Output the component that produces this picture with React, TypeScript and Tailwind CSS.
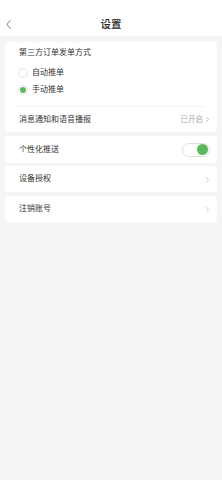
import React, { useState } from 'react';

const Chevron: React.FC<{ className?: string }> = ({ className }) => (
  <svg viewBox="0 0 6 10" className={className} fill="none" stroke="currentColor" strokeWidth="1" strokeLinecap="round" strokeLinejoin="round">
    <path d="M1.5 1.5 L4.5 5 L1.5 8.5" />
  </svg>
);

const Radio: React.FC<{ checked: boolean; label: string; onClick: () => void; className?: string }> = ({ checked, label, onClick, className }) => (
  <button type="button" onClick={onClick} className={`flex items-center pl-[13px] text-left ${className ?? ''}`}>
    <span className="flex h-[10px] w-[10px] items-center justify-center rounded-full border border-[#e3e3e3] bg-white">
      {checked && <span className="h-[6px] w-[6px] rounded-full bg-[#5cb85c]" />}
    </span>
    <span className="ml-[4px] text-[8px] text-[#333]">{label}</span>
  </button>
);

export default function App() {
  const [mode, setMode] = useState<'auto' | 'manual'>('manual');
  const [push, setPush] = useState(true);

  return (
    <div className="min-h-[480px] w-[222px] bg-[#f5f5f5] font-['Liberation_Sans','Noto_Sans_CJK_SC',sans-serif]">
      {/* header */}
      <div className="relative flex h-[36px] items-center justify-center bg-white pt-[14px]">
        <Chevron className="absolute left-[5px] top-[19px] h-[11px] w-[7px] rotate-180 text-[#999]" />
        <span className="text-[10.5px] font-medium text-[#222]">设置</span>
      </div>

      <div className="flex flex-col px-[5px] pt-[6px]">
        {/* card 1 */}
        <div className="flex flex-col rounded-[3px] bg-white">
          <div className="flex h-[22px] items-center pl-[14px] text-[8px] text-[#333]">第三方订单发单方式</div>
          <Radio className="h-[17px]" checked={mode === 'auto'} label="自动推单" onClick={() => setMode('auto')} />
          <Radio className="h-[18px]" checked={mode === 'manual'} label="手动推单" onClick={() => setMode('manual')} />
          <div className="mx-[13px] mt-[7px] h-px bg-[#f2f2f2]" />
          <div className="flex h-[25px] items-center justify-between pl-[14px] pr-[7px]">
            <span className="text-[8px] text-[#333]">消息通知和语音播报</span>
            <span className="flex items-center gap-[2px] text-[7.5px] text-[#aaa]">
              已开启
              <Chevron className="h-[7px] w-[5px] text-[#aaa]" />
            </span>
          </div>
        </div>

        {/* card 2 */}
        <div className="mt-[4px] flex h-[27px] items-center justify-between rounded-[3px] bg-white pl-[14px] pr-[7px]">
          <span className="text-[8px] text-[#333]">个性化推送</span>
          <button
            type="button"
            onClick={() => setPush(!push)}
            className={`flex h-[14px] w-[28px] items-center rounded-full border border-[#d9e6d6] bg-white px-[1px] ${push ? 'justify-end' : 'justify-start'}`}
          >
            <span className={`h-[11px] w-[11px] rounded-full ${push ? 'bg-[#5cb85c]' : 'bg-[#ddd]'}`} />
          </button>
        </div>

        {/* card 3 */}
        <div className="mt-[3px] flex h-[26px] items-center justify-between rounded-[3px] bg-white pl-[14px] pr-[7px]">
          <span className="text-[8px] text-[#333]">设备授权</span>
          <Chevron className="h-[7px] w-[5px] text-[#bbb]" />
        </div>

        {/* card 4 */}
        <div className="mt-[4px] flex h-[26px] items-center justify-between rounded-[3px] bg-white pl-[14px] pr-[7px]">
          <span className="text-[8px] text-[#333]">注销账号</span>
          <Chevron className="h-[7px] w-[5px] text-[#bbb]" />
        </div>
      </div>
    </div>
  );
}
